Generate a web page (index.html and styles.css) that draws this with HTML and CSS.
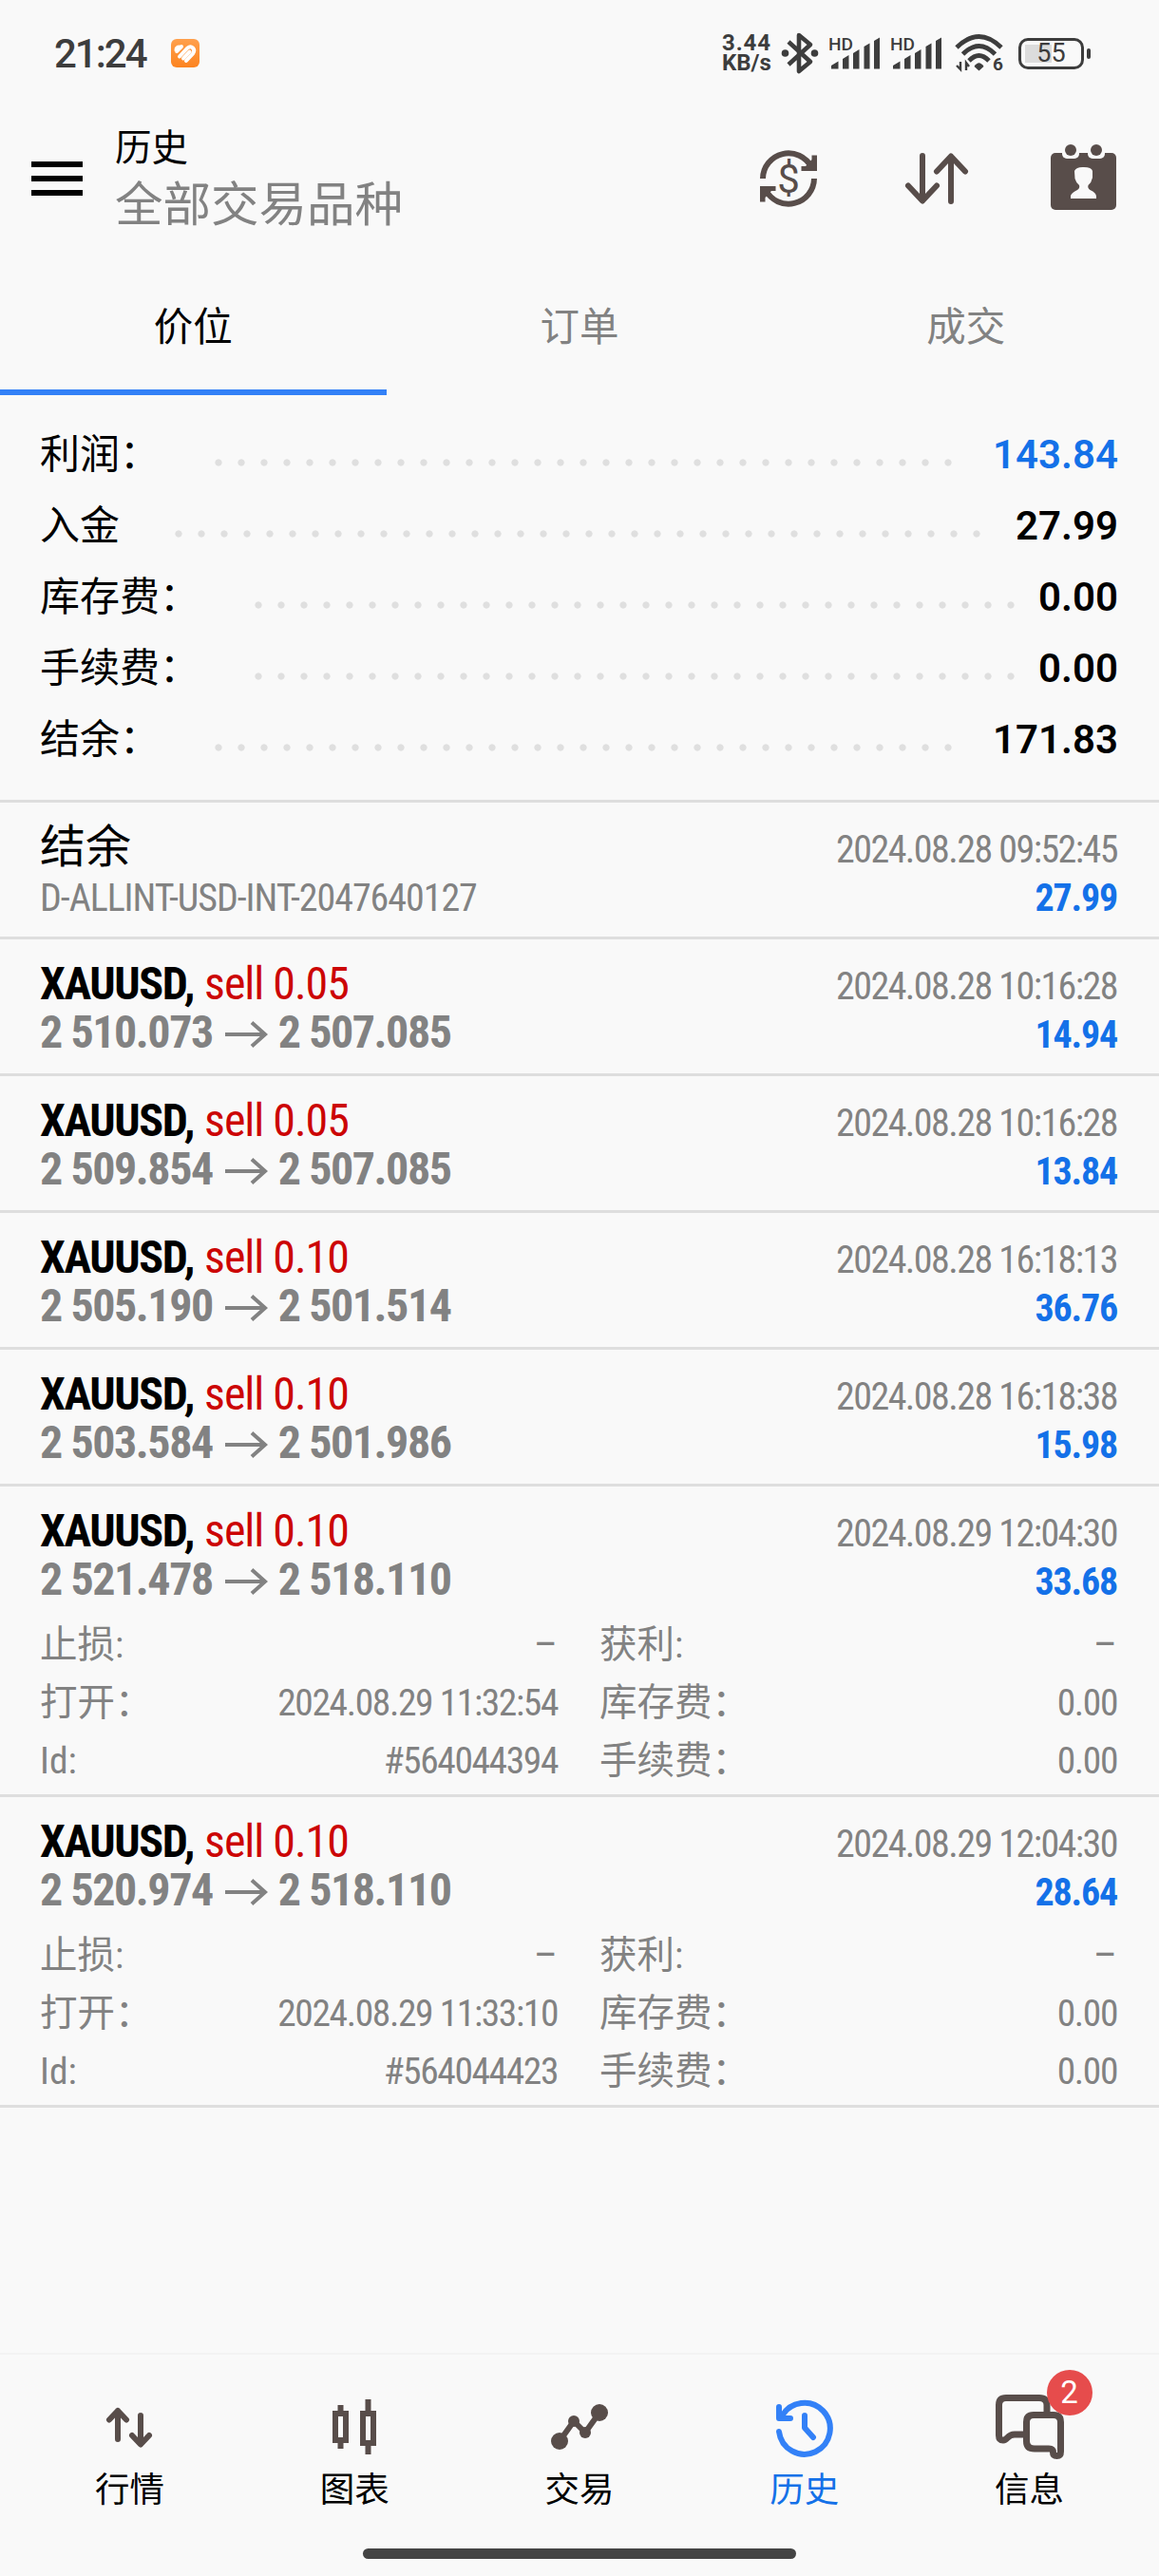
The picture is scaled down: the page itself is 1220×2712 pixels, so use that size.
FILE: index.html
```html
<!DOCTYPE html>
<html lang="zh-CN">
<head>
<meta charset="utf-8">
<title>历史</title>
<link rel="stylesheet" href="styles.css">
</head>
<body>
  <div class="phone">
    <div class="status">
      <span class="clock">21:24</span>
      <svg class="app-badge" width="30" height="30" viewBox="0 0 30 30">
        <defs><linearGradient id="orange" x1="0" y1="0" x2="0" y2="1"><stop offset="0" stop-color="#ffa04d"/><stop offset="1" stop-color="#fc8420"/></linearGradient></defs>
        <rect width="30" height="30" rx="6" fill="url(#orange)"/>
        <g fill="none" stroke="#fff" stroke-width="4" stroke-linecap="round"><path d="M5.500 12Q5.500 8.500 9 8.500M6 13L11 8"/><path d="M9 18.500L17.500 9.500Q20.500 7 23 9.500Q25.500 12 23 15.500L16 23"/><path d="M13 20.500L19.500 13.500"/></g>
      </svg>
      <div class="speed"><span>3.44</span><span>KB/s</span></div>
      <svg class="bt" width="40" height="44" viewBox="0 0 40 44">
        <path d="M8 10L31 31L19 41V3L31 13L8 34" fill="none" stroke="#3d3d3d" stroke-width="4.600" stroke-linejoin="round"/>
        <circle cx="4.500" cy="22" r="3.800" fill="#3d3d3d"/><circle cx="35.500" cy="22" r="3.800" fill="#3d3d3d"/>
      </svg>
      <svg class="signal" width="55" height="36" viewBox="0 0 55 36">
        <text x="0" y="14.500" textLength="26" lengthAdjust="spacingAndGlyphs">HD</text>
        <path d="M3 34.500V31L10.500 26.500V34.500ZM15 34.500V24L21.500 20V34.500ZM26 34.500V18L32.500 14V34.500ZM37.500 34.500V11L43.500 7.500V34.500ZM48 34.500V5L54 1.500V34.500Z"/>
      </svg>
      <svg class="signal second" width="55" height="36" viewBox="0 0 55 36">
        <text x="0" y="14.500" textLength="26" lengthAdjust="spacingAndGlyphs">HD</text>
        <path d="M3 34.500V31L10.500 26.500V34.500ZM15 34.500V24L21.500 20V34.500ZM26 34.500V18L32.500 14V34.500ZM37.500 34.500V11L43.500 7.500V34.500ZM48 34.500V5L54 1.500V34.500Z"/>
      </svg>
      <svg class="wifi" width="52" height="40" viewBox="0 0 52 40">
        <g fill="none" stroke="#3d3d3d" stroke-width="4.800"><path d="M2 14Q25.500-9 49 14"/><path d="M8.500 21Q25.500 4 42.500 21"/><path d="M15 28Q25.500 17 36 28"/></g>
        <path d="M20.500 34Q25.500 26.500 30.500 34L25.500 38.500Z" fill="#3d3d3d"/>
        <path d="M2 33L6 37V29M12 38V30L15 34" fill="none" stroke="#3d3d3d" stroke-width="2.400"/>
        <text x="40" y="38">6</text>
      </svg>
      <div class="battery"><span>55</span></div>
      <i class="nub"></i>
    </div>

    <header class="header">
      <div class="burger"><i></i><i></i><i></i></div>
      <div class="heading">
        <h1>历史</h1>
        <p>全部交易品种</p>
      </div>
      <svg class="ic-currency" width="60" height="60" viewBox="0 0 60 60">
        <g id="half"><path d="M3 30A27 27 0 0 1 54 18" fill="none" stroke="#584d4a" stroke-width="6"/><path d="M60 5.500V22H43.500V17H48L54.500 10V5.500Z" fill="#584d4a"/></g>
        <use href="#half" transform="rotate(180 30 30)"/>
        <text x="30" y="44.500">$</text>
      </svg>
      <svg class="ic-sort" width="66" height="54" viewBox="0 0 66 54">
        <path d="M18 3V50M3 34.500L18 50.500L33 34.500M48 51V4M33 19.500L48 3.500L63 19.500"/>
      </svg>
      <svg class="ic-cal" width="69" height="71" viewBox="0 0 69 71">
        <rect y="11" width="69" height="60" rx="5" fill="#584d4a"/>
        <g fill="#f9f9f9"><rect x="12" y="2" width="18" height="15" rx="5"/><rect x="39" y="2" width="18" height="15" rx="5"/>
        <path d="M21 59V56Q22 53 28 50Q31 48 30 45Q26.500 42 25.500 38L25 30Q27 25.500 35 26Q43 26 44 30V37Q43 42 39.500 45Q38.500 48 41.500 50Q48 53 48 57V59Z"/></g>
        <circle cx="21" cy="8" r="6" fill="#584d4a"/><circle cx="48" cy="8" r="6" fill="#584d4a"/>
      </svg>
    </header>

    <nav class="tabs">
      <a class="tab active">价位</a>
      <a class="tab">订单</a>
      <a class="tab">成交</a>
    </nav>

    <section class="summary">
      <div class="sum-row"><span class="label">利润：</span><i class="dots"></i><b class="blue">143.84</b></div>
      <div class="sum-row"><span class="label">入金</span><i class="dots"></i><b>27.99</b></div>
      <div class="sum-row"><span class="label">库存费：</span><i class="dots"></i><b>0.00</b></div>
      <div class="sum-row"><span class="label">手续费：</span><i class="dots"></i><b>0.00</b></div>
      <div class="sum-row"><span class="label">结余：</span><i class="dots"></i><b>171.83</b></div>
    </section>

    <section class="deals">
      <article class="deal">
        <div class="line"><span class="name">结余</span><span class="date">2024.08.28 09:52:45</span></div>
        <div class="line small"><span class="note">D-ALLINT-USD-INT-2047640127</span><span class="profit">27.99</span></div>
      </article>
      <article class="deal">
        <div class="line"><span class="name"><b>XAUUSD,</b> <em>sell 0.05</em></span><span class="date">2024.08.28 10:16:28</span></div>
        <div class="line"><span class="price">2 510.073<svg class="arrow" viewBox="0 0 44 28"><path d="M0 14H42M28 1.500L42 14L28 26.500"/></svg>2 507.085</span><span class="profit">14.94</span></div>
      </article>
      <article class="deal">
        <div class="line"><span class="name"><b>XAUUSD,</b> <em>sell 0.05</em></span><span class="date">2024.08.28 10:16:28</span></div>
        <div class="line"><span class="price">2 509.854<svg class="arrow" viewBox="0 0 44 28"><path d="M0 14H42M28 1.500L42 14L28 26.500"/></svg>2 507.085</span><span class="profit">13.84</span></div>
      </article>
      <article class="deal">
        <div class="line"><span class="name"><b>XAUUSD,</b> <em>sell 0.10</em></span><span class="date">2024.08.28 16:18:13</span></div>
        <div class="line"><span class="price">2 505.190<svg class="arrow" viewBox="0 0 44 28"><path d="M0 14H42M28 1.500L42 14L28 26.500"/></svg>2 501.514</span><span class="profit">36.76</span></div>
      </article>
      <article class="deal">
        <div class="line"><span class="name"><b>XAUUSD,</b> <em>sell 0.10</em></span><span class="date">2024.08.28 16:18:38</span></div>
        <div class="line"><span class="price">2 503.584<svg class="arrow" viewBox="0 0 44 28"><path d="M0 14H42M28 1.500L42 14L28 26.500"/></svg>2 501.986</span><span class="profit">15.98</span></div>
      </article>
      <article class="deal open">
        <div class="line"><span class="name"><b>XAUUSD,</b> <em>sell 0.10</em></span><span class="date">2024.08.29 12:04:30</span></div>
        <div class="line"><span class="price">2 521.478<svg class="arrow" viewBox="0 0 44 28"><path d="M0 14H42M28 1.500L42 14L28 26.500"/></svg>2 518.110</span><span class="profit">33.68</span></div>
        <div class="details">
          <div><span>止损:</span><span class="val dash">–</span></div>
          <div><span>获利:</span><span class="val dash">–</span></div>
          <div><span>打开：</span><span class="val">2024.08.29 11:32:54</span></div>
          <div><span>库存费：</span><span class="val">0.00</span></div>
          <div><span>Id:</span><span class="val">#564044394</span></div>
          <div><span>手续费：</span><span class="val">0.00</span></div>
        </div>
      </article>
      <article class="deal open">
        <div class="line"><span class="name"><b>XAUUSD,</b> <em>sell 0.10</em></span><span class="date">2024.08.29 12:04:30</span></div>
        <div class="line"><span class="price">2 520.974<svg class="arrow" viewBox="0 0 44 28"><path d="M0 14H42M28 1.500L42 14L28 26.500"/></svg>2 518.110</span><span class="profit">28.64</span></div>
        <div class="details">
          <div><span>止损:</span><span class="val dash">–</span></div>
          <div><span>获利:</span><span class="val dash">–</span></div>
          <div><span>打开：</span><span class="val">2024.08.29 11:33:10</span></div>
          <div><span>库存费：</span><span class="val">0.00</span></div>
          <div><span>Id:</span><span class="val">#564044423</span></div>
          <div><span>手续费：</span><span class="val">0.00</span></div>
        </div>
      </article>
    </section>

    <nav class="bottom">
      <a class="item">
        <span class="pic"><svg width="48" height="44" viewBox="0 0 48 44"><path class="round" d="M12 5V35M3 14.500L12 5L21 14.500M36 10V40M27 31L36 40.500L45 31"/></svg></span>
        行情
      </a>
      <a class="item">
        <span class="pic"><svg width="46" height="58" viewBox="0 0 46 58"><path class="sharp" d="M3 15H14V43H3ZM8.500 6V12M8.500 46V52M32 15H43V46H32ZM37.500 0V12M37.500 49V58"/></svg></span>
        图表
      </a>
      <a class="item">
        <span class="pic"><svg width="60" height="48" viewBox="0 0 60 48"><path class="round" d="M9 39L24 18L36 30L51 9"/><g fill="#584d4a"><circle cx="9" cy="39" r="9"/><circle cx="24" cy="18" r="6"/><circle cx="36" cy="30" r="6"/><circle cx="51" cy="9" r="9"/></g></svg></span>
        交易
      </a>
      <a class="item current">
        <span class="pic"><svg width="60" height="60" viewBox="0 0 60 60"><path class="round" d="M3 35A27 27 0 1 0 6 19M3 9V21H15M30 18V31L39 41"/></svg></span>
        历史
      </a>
      <a class="item">
        <span class="pic"><svg width="72" height="68" viewBox="0 0 72 68"><path class="thick" d="M54 19V11Q54 3.500 46 3.500H11Q3.500 3.500 3.500 11V43Q3.500 48 8 48C13 48 12 42 20 42H30"/><path class="thick" d="M40 21.500H61Q68.500 21.500 68.500 29V60Q68.500 64.500 64.500 64.500Q60.500 64.500 60.500 61Q60.500 57 56 57H41Q32.500 57 32.500 49V29Q32.500 21.500 40 21.500Z"/></svg><i class="count">2</i></span>
        信息
      </a>
    </nav>
    <div class="home"></div>
  </div>
</body>
</html>
```
FILE: styles.css
```css
* {
    margin: 0;
    padding: 0;
    box-sizing: border-box;
}
body
{
    background: #f9f9f9;
    font-family: Roboto, "Noto Sans CJK SC", sans-serif;
    color: #000;
}
i, em
{
    font-style: normal;
}
svg
{
    display: block;
    flex: none;
    overflow: visible;
}
.phone
{
    width: 1220px;
    height: 2712px;
    display: flex;
    flex-direction: column;
    overflow: hidden;
}

/* status bar */
.status
{
    height: 112px;
    padding: 0 71px 0 57px;
    display: flex;
    align-items: center;
    color: #3d3d3d;
}
.clock
{
    width: 123px;
    font-size: 42px;
    font-weight: 500;
    letter-spacing: -2px;
}
.speed
{
    width: 52px;
    margin-left: 550px;
    font-size: 24px;
    line-height: 21px;
    font-weight: 700;
}
.speed span
{
    display: block;
}
.speed span:first-child
{
    letter-spacing: .9px;
}
.bt
{
    margin-left: 10px;
}
.signal
{
    margin-left: 10px;
    fill: #3d3d3d;
}
.signal text
{
    font-size: 18.5px;
    font-weight: 500;
}
.wifi
{
    margin-left: 13px;
}
.wifi text
{
    font-size: 19px;
    font-weight: 700;
    fill: #3d3d3d;
}
.battery
{
    width: 69px;
    height: 33px;
    margin-left: 15px;
    border: 3px solid #3d3d3d;
    border-radius: 10px;
    background: linear-gradient(#dcdcdc, #dcdcdc) 4px 4px / 28px 19px no-repeat;
    display: flex;
    align-items: center;
    justify-content: center;
    font-size: 27px;
}
.nub
{
    width: 4px;
    height: 11px;
    margin-left: 3px;
    border-radius: 2px;
    background: #3d3d3d;
}

/* header */
.header
{
    height: 178px;
    padding: 0 45px 26px 33px;
    display: flex;
    align-items: center;
}
.burger
{
    width: 54px;
    height: 36px;
    margin: 0 34px 0 0;
    display: flex;
    flex-direction: column;
    justify-content: space-between;
}
.burger i
{
    height: 6px;
    background: #000;
}
.heading
{
    flex: 1;
    padding-top: 4px;
}
.heading h1
{
    font-size: 38.5px;
    line-height: 50px;
    font-weight: 400;
}
.heading p
{
    margin-top: 1px;
    font-size: 50.5px;
    line-height: 68px;
    color: #828282;
}
.ic-currency text
{
    font-size: 42px;
    text-anchor: middle;
    fill: #584d4a;
}
.ic-sort
{
    margin: 0 87px 0 93px;
    fill: none;
    stroke: #584d4a;
    stroke-width: 6;
    stroke-linecap: round;
    stroke-linejoin: round;
}
.ic-cal
{
    margin-bottom: 6px;
}

/* tabs */
.tabs
{
    height: 126px;
    display: flex;
}
.tab
{
    flex: 1;
    padding-bottom: 18px;
    border-bottom: 6px solid transparent;
    display: flex;
    align-items: center;
    justify-content: center;
    font-size: 41.5px;
    color: #828282;
}
.tab.active
{
    color: #000;
    border-color: #3381f7;
}

/* summary */
.summary
{
    padding: 25px 43px 26px 42px;
}
.sum-row
{
    height: 75px;
    display: flex;
    align-items: center;
    font-size: 42px;
    line-height: 76px;
}
.sum-row b
{
    font-weight: 600;
}
.dots
{
    flex: 1;
    margin: 17px 14px 0 50px;
}
/* only whole dots are shown */
.dots::before
{
    content: "";
    display: block;
    width: round(down, 100%, 24px);
    height: 8px;
    background: radial-gradient(circle, #dfdfdf 3.2px, transparent 4px) 0 0 / 24px 8px repeat-x;
}
.sum-row .blue
{
    color: #1471e8;
}

/* deals */
.deals
{
    border-bottom: 3px solid #dedede;
    font-family: "Roboto Condensed", Roboto, "Noto Sans CJK SC", sans-serif;
    font-stretch: 75%;
    color: #828282;
}
.deal
{
    height: 144px;
    padding: 21px 44px 0 42px;
    border-top: 3px solid #dedede;
}
.deal.open
{
    height: 327px;
}
.line
{
    display: flex;
    justify-content: space-between;
    align-items: baseline;
    height: 51px;
    font-size: 48px;
    line-height: 51px;
    white-space: nowrap;
}
.name
{
    color: #000;
}
.name b
{
    letter-spacing: -1.4px;
}
.name em
{
    color: #cc0505;
    letter-spacing: -1.05px;
}
.price
{
    font-weight: 700;
    letter-spacing: -1.45px;
}
.arrow
{
    display: inline-block;
    width: 44px;
    height: 28px;
    margin: 0 12px 0 13px;
    fill: none;
    stroke: #828282;
    stroke-width: 4;
}
.date, .profit, .note
{
    font-size: 40px;
}
.date
{
    letter-spacing: -1.55px;
}
.note
{
    letter-spacing: -1.05px;
}
.profit
{
    font-weight: 700;
    letter-spacing: -1.2px;
    color: #1471e8;
}
.line.small
{
    padding-top: 3px;
}
.details
{
    margin-top: 13px;
    display: grid;
    grid-template-columns: 1fr 1fr;
    column-gap: 44px;
    font-size: 39.5px;
    line-height: 61px;
}
.details div
{
    display: flex;
    justify-content: space-between;
}
.val
{
    letter-spacing: -1.4px;
}
.val.dash
{
    font-size: 44px;
    letter-spacing: 0;
}

/* bottom navigation */
.bottom
{
    height: 201px;
    margin-top: auto;
    padding: 0 18px;
    border-top: 2px solid #f3f3f3;
    display: flex;
}
.item
{
    flex: 1;
    display: flex;
    flex-direction: column;
    align-items: center;
    padding-top: 38px;
    font-size: 36.5px;
    line-height: 50px;
}
.item.current
{
    color: #1471e8;
}
.pic
{
    position: relative;
    height: 76px;
    margin-bottom: 4px;
    display: flex;
    align-items: center;
}
.pic path
{
    fill: none;
    stroke: #584d4a;
    stroke-width: 6;
}
.pic .round, .pic .thick
{
    stroke-linecap: round;
    stroke-linejoin: round;
}
.pic .thick
{
    stroke-width: 7;
    stroke-linecap: butt;
}
.current .pic path
{
    stroke: #3381f7;
}
.count
{
    position: absolute;
    left: 54px;
    top: -22px;
    width: 48px;
    height: 48px;
    border-radius: 50%;
    background: #e64c4c;
    color: #fff;
    font-size: 33px;
    line-height: 48px;
    text-align: center;
}
.home
{
    width: 456px;
    height: 11px;
    margin: 5px auto 18px;
    border-radius: 6px;
    background: #444;
}
```
